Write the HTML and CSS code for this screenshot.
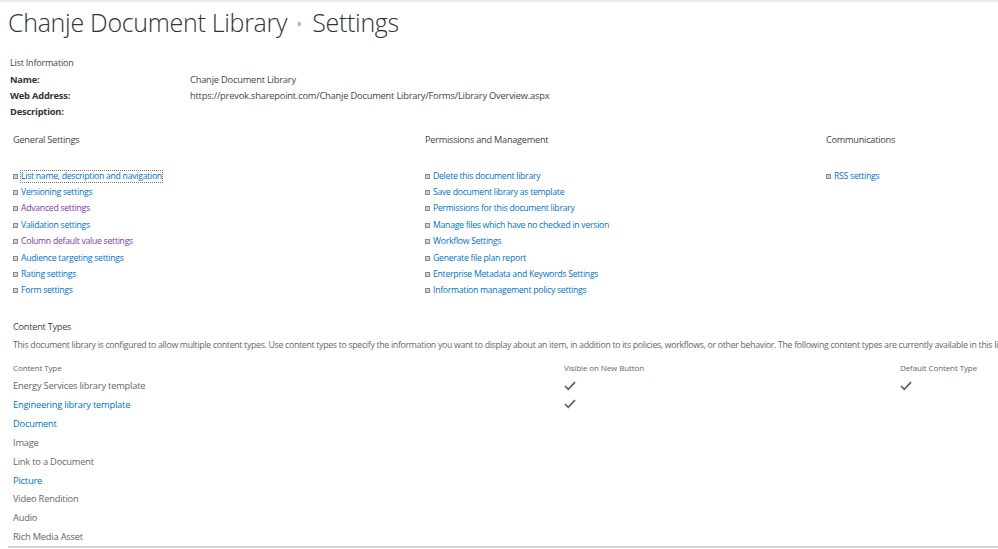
FILE: index.html
```html
<!DOCTYPE html>
<html lang="en">
<head>
<meta charset="utf-8">
<title>Chanje Document Library - Settings</title>
<link rel="stylesheet" href="styles.css">
</head>
<body>
<div class="page">
  <header class="title">
    <span class="crumb">Chanje Document Library</span>
    <span class="sep"><svg width="6" height="8" viewBox="0 0 6 8"><path d="M1 1 L5 4 L1 7 Z" fill="#b3b3b3"/></svg></span>
    <span class="crumb">Settings</span>
  </header>

  <section class="list-info">
    <div class="li-head">List Information</div>
    <div class="li-row"><span class="li-label">Name:</span><span class="li-value">Chanje Document Library</span></div>
    <div class="li-row"><span class="li-label">Web Address:</span><span class="li-value">https://prevok.sharepoint.com/Chanje Document Library/Forms/Library Overview.aspx</span></div>
    <div class="li-row"><span class="li-label">Description:</span><span class="li-value"></span></div>
  </section>

  <section class="settings">
    <div class="col col1">
      <h3 class="col-head">General Settings</h3>
      <ul class="links">
        <li><a class="focus">List name, description and navigation</a></li>
        <li><a>Versioning settings</a></li>
        <li><a class="visited">Advanced settings</a></li>
        <li><a>Validation settings</a></li>
        <li><a class="visited">Column default value settings</a></li>
        <li><a>Audience targeting settings</a></li>
        <li><a>Rating settings</a></li>
        <li><a>Form settings</a></li>
      </ul>
    </div>
    <div class="col col2">
      <h3 class="col-head">Permissions and Management</h3>
      <ul class="links">
        <li><a>Delete this document library</a></li>
        <li><a>Save document library as template</a></li>
        <li><a>Permissions for this document library</a></li>
        <li><a>Manage files which have no checked in version</a></li>
        <li><a>Workflow Settings</a></li>
        <li><a>Generate file plan report</a></li>
        <li><a>Enterprise Metadata and Keywords Settings</a></li>
        <li><a>Information management policy settings</a></li>
      </ul>
    </div>
    <div class="col col3">
      <h3 class="col-head">Communications</h3>
      <ul class="links">
        <li><a>RSS settings</a></li>
      </ul>
    </div>
  </section>

  <section class="ctypes">
    <h3 class="ct-head">Content Types</h3>
    <p class="ct-desc">This document library is configured to allow multiple content types. Use content types to specify the information you want to display about an item, in addition to its policies, workflows, or other behavior. The following content types are currently available in this library:</p>
    <div class="ct-table">
      <div class="ct-row ct-th"><span>Content Type</span><span>Visible on New Button</span><span>Default Content Type</span></div>
      <div class="ct-row"><span class="ct-name">Energy Services library template</span><span class="chk"><svg width="12" height="10" viewBox="0 0 12 10"><path d="M1 5 L4.3 8.3 L11 1.2" fill="none" stroke="#5f5f5f" stroke-width="1.7"/></svg></span><span class="chk"><svg width="12" height="10" viewBox="0 0 12 10"><path d="M1 5 L4.3 8.3 L11 1.2" fill="none" stroke="#5f5f5f" stroke-width="1.7"/></svg></span></div>
      <div class="ct-row"><a class="ct-name">Engineering library template</a><span class="chk"><svg width="12" height="10" viewBox="0 0 12 10"><path d="M1 5 L4.3 8.3 L11 1.2" fill="none" stroke="#5f5f5f" stroke-width="1.7"/></svg></span><span></span></div>
      <div class="ct-row"><a class="ct-name">Document</a><span></span><span></span></div>
      <div class="ct-row"><span class="ct-name">Image</span><span></span><span></span></div>
      <div class="ct-row"><span class="ct-name">Link to a Document</span><span></span><span></span></div>
      <div class="ct-row"><a class="ct-name">Picture</a><span></span><span></span></div>
      <div class="ct-row"><span class="ct-name">Video Rendition</span><span></span><span></span></div>
      <div class="ct-row"><span class="ct-name">Audio</span><span></span><span></span></div>
      <div class="ct-row ct-last"><span class="ct-name">Rich Media Asset</span><span></span><span></span></div>
    </div>
  </section>
</div>
</body>
</html>
```

FILE: styles.css
```css
html, body {
  margin: 0;
  padding: 0;
  background: #fff;
}
body {
  font-family: "Open Sans", "Noto Sans", sans-serif;
  color: #444;
  overflow: hidden;
  width: 998px;
  height: 549px;
}
.page {
  border-top: 2px solid #ececec;
  height: 547px;
  overflow: hidden;
}
.title {
  display: flex;
  align-items: center;
  padding: 2px 0 0 8px;
  height: 36px;
  font-size: 25px;
  font-weight: 300;
  color: #333;
  letter-spacing: -0.3px;
}
.sep {
  display: flex;
  align-items: center;
  margin: 4px 9px 0 10px;
}
.list-info {
  padding: 15px 0 0 10px;
  font-size: 9.3px;
  letter-spacing: -0.2px;
}
.li-head {
  height: 16px;
  line-height: 16px;
  margin-bottom: 1px;
  font-size: 9px;
}
.li-row {
  display: flex;
  height: 16px;
  line-height: 16px;
}
.li-label {
  width: 180px;
  font-weight: 700;
  color: #333;
}
.li-value {
  color: #444;
}
.settings {
  display: grid;
  grid-template-columns: 412px 401px 1fr;
  padding: 12px 0 0 13px;
}
.col-head {
  margin: 0;
  font-size: 9.2px;
  letter-spacing: -0.25px;
  font-weight: 400;
  color: #444;
  line-height: 16px;
}
.links {
  list-style: none;
  margin: 20px 0 0 0;
  padding: 0;
}
.links li {
  display: flex;
  align-items: center;
  height: 16.4px;
  font-size: 8.7px;
  letter-spacing: -0.28px;
}
.links li::before {
  content: "";
  width: 3px;
  height: 3px;
  border: 1px solid #8a8a8a;
  background: #d4d4d4;
  margin: 0 3px 0 0;
  flex: none;
}
.links a {
  color: #0072c6;
  text-decoration: none;
  line-height: 11px;
}
.links a.visited {
  color: #7d3a9f;
}
.links a.focus {
  outline: 1px dotted #777;
  outline-offset: 0;
}
.ctypes {
  padding: 20px 0 0 13px;
}
.ct-head {
  margin: 0;
  font-size: 9.2px;
  letter-spacing: -0.25px;
  font-weight: 400;
  color: #444;
  line-height: 16px;
}
.ct-desc {
  margin: 2px 0 0 0;
  font-size: 8.75px;
  letter-spacing: -0.3px;
  color: #666;
  white-space: nowrap;
  line-height: 16px;
}
.ct-table {
  margin-top: 6px;
}
.ct-row {
  display: grid;
  grid-template-columns: 551px 336px 1fr;
  align-items: center;
  height: 18.9px;
  font-size: 9.3px;
  letter-spacing: -0.2px;
  color: #666;
}
.ct-row.ct-th {
  height: 17px;
  font-size: 8px;
  letter-spacing: -0.1px;
  color: #666;
}
.ct-name {
  color: #666;
  text-decoration: none;
}
a.ct-name {
  color: #0072c6;
}
.chk {
  display: flex;
  padding-left: 0;
}
.ct-last {
  border-bottom: 2px solid #d6d6d6;
  margin-left: -5px;
  padding-left: 5px;
}
```
